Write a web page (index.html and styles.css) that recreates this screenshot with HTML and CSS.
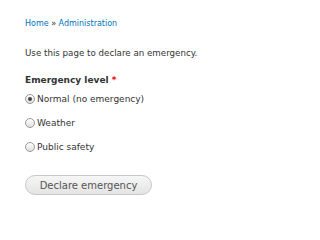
FILE: index.html
```html
<!DOCTYPE html>
<html>
<head>
<meta charset="utf-8">
<link rel="stylesheet" href="styles.css">
</head>
<body>
<div class="page">
  <nav class="breadcrumb"><a href="#">Home</a> » <a href="#">Administration</a></nav>
  <p class="intro">Use this page to declare an emergency.</p>
  <div class="field">
    <div class="label">Emergency level <span class="req">*</span></div>
    <label class="option"><span class="radio checked"></span>Normal (no emergency)</label>
    <label class="option"><span class="radio"></span>Weather</label>
    <label class="option"><span class="radio"></span>Public safety</label>
  </div>
  <button class="btn">Declare emergency</button>
</div>
</body>
</html>
```
FILE: styles.css
```css
html, body { margin: 0; padding: 0; background: #fff; }
body { font-family: "DejaVu Sans", "Liberation Sans", sans-serif; color: #333; }
.page { padding: 18px 0 0 25px; display: flex; flex-direction: column; align-items: flex-start; }
.breadcrumb { font-size: 8px; line-height: 12px; color: #333; }
.breadcrumb a { color: #0074bd; text-decoration: none; }
.intro { margin: 17px 0 0; font-size: 8.7px; line-height: 12px; }
.field { margin-top: 15px; display: flex; flex-direction: column; }
.label { font-size: 9px; font-weight: bold; line-height: 12px; }
.req { color: #e00; }
.option { display: flex; align-items: center; font-size: 9px; line-height: 12px; margin-top: 7px; }
.option + .option { margin-top: 12px; }
.radio { width: 10px; height: 10px; border: 1px solid #999; border-radius: 50%; margin-right: 2px; box-sizing: border-box; background: linear-gradient(#fff, #e0e0e0); display: inline-flex; align-items: center; justify-content: center; }
.radio.checked::after { content: ""; width: 4px; height: 4px; border-radius: 50%; background: #444; }
.btn { margin-top: 22px; width: 127px; height: 20px; border: 1px solid #c8c8c8; border-radius: 10px; background: linear-gradient(#f6f6f6, #e4e4e4); color: #555; font-family: "DejaVu Sans", sans-serif; font-size: 10px; padding: 0; }
```
